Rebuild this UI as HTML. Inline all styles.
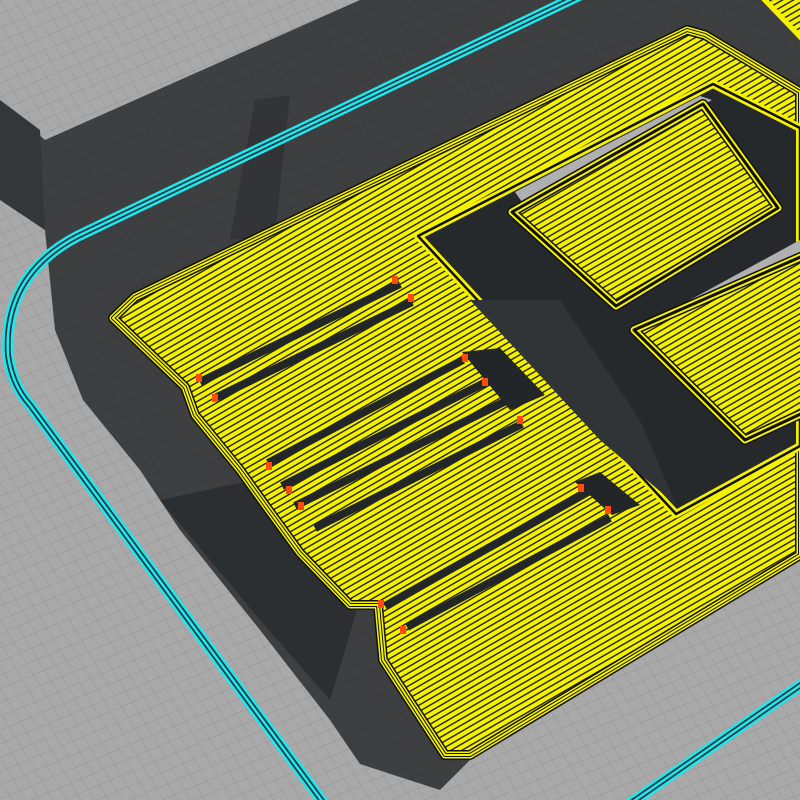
<!DOCTYPE html>
<html><head><meta charset="utf-8"><style>html,body{margin:0;padding:0;background:#a8a8a8}svg{display:block}</style></head>
<body>
<svg width="800" height="800" viewBox="0 0 800 800" xmlns="http://www.w3.org/2000/svg">
<defs>
<pattern id="grid" width="11" height="11" patternUnits="userSpaceOnUse" patternTransform="matrix(1,-0.42,0.6,1,0,0)">
<rect width="11" height="11" fill="#a9a9a9"/>
<path d="M0 0H11M0 0V11" stroke="#979797" stroke-width="1"/>
</pattern>
<pattern id="gridd" width="11" height="11" patternUnits="userSpaceOnUse" patternTransform="matrix(1,-0.42,0.6,1,0,0)">
<rect width="11" height="11" fill="#3d3f41"/>
<path d="M0 0H11M0 0V11" stroke="#37393b" stroke-width="1"/>
</pattern>
<pattern id="hatch" width="5.5" height="5.5" patternUnits="userSpaceOnUse" patternTransform="rotate(-30)">
<rect width="5.5" height="5.5" fill="#f5f200"/>
<rect y="0" width="5.5" height="1.4" fill="#1e1e10"/>
</pattern>
</defs>
<rect width="800" height="800" fill="url(#grid)"/>
<polygon points="0,100 45,140 360,0 800,0 800,555 475,755 440,790 360,764 330,720 260,630 180,530 140,470 83,400 55,330 45,230 0,160" fill="url(#gridd)"/>
<polygon points="0,100 40,130 45,230 0,200" fill="#343638"/>
<polygon points="160,500 300,470 360,600 330,700 260,620" fill="#2c2f31"/>
<path d="M230 240 L255 100 L290 95 L275 235 Z" fill="#303234" opacity="0.8"/>
<g fill="none">
<path d="M580 -5 L78 236 Q3 275 8 355 Q12 385 30 405 L325 805" stroke="#22e6ee" stroke-width="11"/>
<path d="M580 -5 L78 236 Q3 275 8 355 Q12 385 30 405 L325 805" stroke="#1c3a40" stroke-width="6"/>
<path d="M580 -5 L78 236 Q3 275 8 355 Q12 385 30 405 L325 805" stroke="#22e6ee" stroke-width="2.5"/>
<path d="M628 805 L805 682" stroke="#22e6ee" stroke-width="11"/>
<path d="M628 805 L805 682" stroke="#1c3a40" stroke-width="6"/>
<path d="M628 805 L805 682" stroke="#22e6ee" stroke-width="2.5"/>
</g>
<g stroke-linejoin="round">
<polygon points="113,318 135,297 687,30 705,35 800,92 800,555 470,755 445,755 383,660 378,605 350,605 300,553 265,505 240,470 195,415 185,387" fill="url(#hatch)" stroke="#111" stroke-width="10"/>
<polygon points="113,318 135,297 687,30 705,35 800,92 800,555 470,755 445,755 383,660 378,605 350,605 300,553 265,505 240,470 195,415 185,387" fill="none" stroke="#f5f200" stroke-width="7"/>
<polygon points="113,318 135,297 687,30 705,35 800,92 800,555 470,755 445,755 383,660 378,605 350,605 300,553 265,505 240,470 195,415 185,387" fill="none" stroke="#111" stroke-width="4"/>
<polygon points="113,318 135,297 687,30 705,35 800,92 800,555 470,755 445,755 383,660 378,605 350,605 300,553 265,505 240,470 195,415 185,387" fill="none" stroke="#f5f200" stroke-width="2"/>
<polygon points="418,236 713,84 800,128 800,446 676,514" fill="#25292b" stroke="#f5f200" stroke-width="8"/>
<polygon points="418,236 713,84 800,128 800,446 676,514" fill="none" stroke="#111" stroke-width="2.5"/>
<polygon points="470,300 560,300 640,420 676,505 600,440" fill="#303436"/>
<polygon points="515,192 700,96 712,100 522,202" fill="#b0b0b0"/>
<polygon points="690,300 800,240 800,262 700,312" fill="#b0b0b0"/>
<polygon points="512,212 703,104 778,208 616,306" fill="url(#hatch)" stroke="#111" stroke-width="10"/>
<polygon points="512,212 703,104 778,208 616,306" fill="none" stroke="#f5f200" stroke-width="7"/>
<polygon points="512,212 703,104 778,208 616,306" fill="none" stroke="#111" stroke-width="3"/>
<polygon points="634,330 805,255 805,412 745,440" fill="url(#hatch)" stroke="#111" stroke-width="10"/>
<polygon points="634,330 805,255 805,412 745,440" fill="none" stroke="#f5f200" stroke-width="7"/>
<polygon points="634,330 805,255 805,412 745,440" fill="none" stroke="#111" stroke-width="3"/>
<polygon points="760,-5 805,-5 805,42" fill="url(#hatch)" stroke="#f5f200" stroke-width="5"/>
<g stroke="#222628" stroke-width="8" fill="none">
<path d="M200 382 L400 284"/>
<path d="M215 398 L412 302"/>
<path d="M268 463 L463 360"/>
<path d="M282 486 L490 380"/>
<path d="M295 506 L512 398"/>
<path d="M315 528 L522 424"/>
<path d="M385 606 L588 492"/>
<path d="M407 627 L610 518"/>
</g>
<g fill="#222628">
<polygon points="462,352 500,348 545,395 510,410"/>
<polygon points="575,482 600,472 640,505 612,515"/>
</g>
<g fill="#ff4a10">
<rect x="196" y="374" width="6" height="8"/><rect x="212" y="394" width="6" height="8"/>
<rect x="392" y="276" width="6" height="8"/><rect x="408" y="294" width="6" height="8"/>
<rect x="462" y="354" width="6" height="8"/><rect x="482" y="378" width="6" height="8"/>
<rect x="517" y="416" width="6" height="8"/><rect x="266" y="462" width="6" height="8"/>
<rect x="286" y="486" width="6" height="8"/><rect x="298" y="502" width="6" height="8"/>
<rect x="578" y="484" width="6" height="8"/><rect x="605" y="506" width="6" height="8"/>
<rect x="378" y="600" width="6" height="8"/><rect x="400" y="626" width="6" height="8"/>
</g>
</g>
</svg>
</body></html>
